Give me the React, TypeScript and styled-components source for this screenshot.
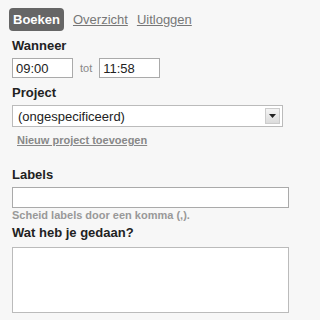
import styled, { createGlobalStyle } from "styled-components";

const GlobalStyle = createGlobalStyle`
    html, body {
        margin: 0;
        padding: 0;
        background: #f7f7f7;
        font-family: "Liberation Sans", Arial, sans-serif;
    }
`;

const Page = styled.div`
    width: 320px;
    height: 320px;
    overflow: hidden;
    padding: 8px 0 0 12px;
    box-sizing: border-box;
    color: #222;
`;

const Nav = styled.nav`
    display: flex;
    align-items: center;
    gap: 9px;
    margin-left: -3px;
`;

const ActiveTab = styled.span`
    display: inline-block;
    background: #666;
    color: #fff;
    font-weight: bold;
    font-size: 13px;
    line-height: 23px;
    padding: 0 4px;
    border-radius: 4px;
`;

const TabLink = styled.a`
    color: #777;
    font-size: 13px;
    text-decoration: underline;
    cursor: pointer;
`;

const Label = styled.div<{ $top: number }>`
    font-weight: bold;
    font-size: 13px;
    line-height: 15px;
    margin-top: ${p => p.$top}px;
`;

const TimeRow = styled.div`
    display: flex;
    align-items: center;
    gap: 7px;
    margin-top: 5px;
`;

const TimeInput = styled.input`
    width: 61px;
    height: 20px;
    box-sizing: border-box;
    border: 1px solid #aaa;
    background: #fff;
    font-family: inherit;
    font-size: 13px;
    padding: 1px 3px;
    color: #222;
`;

const Tot = styled.span`
    color: #888;
    font-size: 11px;
`;

const SelectBox = styled.div`
    display: flex;
    align-items: center;
    justify-content: space-between;
    width: 271px;
    height: 22px;
    box-sizing: border-box;
    border: 1px solid #bbb;
    background: #fff;
    margin-top: 5px;
    padding: 0 2px 0 5px;
    font-size: 13px;
`;

const SelectArrow = styled.span`
    width: 15px;
    height: 16px;
    box-sizing: border-box;
    border: 1px solid #ccc;
    background: linear-gradient(#f4f4f4, #dcdcdc);
    display: flex;
    align-items: center;
    justify-content: center;
`;

const SmallLink = styled.a`
    display: block;
    color: #888;
    font-size: 11px;
    font-weight: bold;
    text-decoration: underline;
    margin: 7px 0 0 5px;
    cursor: pointer;
`;

const TextInput = styled.input`
    display: block;
    width: 277px;
    height: 21px;
    box-sizing: border-box;
    border: 1px solid #aaa;
    background: #fff;
    margin-top: 5px;
`;

const Hint = styled.div`
    color: #999;
    font-size: 11px;
    font-weight: bold;
    margin-top: 1px;
`;

const TextArea = styled.textarea`
    display: block;
    width: 277px;
    height: 66px;
    box-sizing: border-box;
    border: 1px solid #bbb;
    background: #fff;
    margin-top: 7px;
    resize: none;
`;

export default function App() {
    return (
        <Page>
            <GlobalStyle />
            <Nav>
                <ActiveTab>Boeken</ActiveTab>
                <TabLink>Overzicht</TabLink>
                <TabLink>Uitloggen</TabLink>
            </Nav>

            <Label $top={7}>Wanneer</Label>
            <TimeRow>
                <TimeInput defaultValue="09:00" />
                <Tot>tot</Tot>
                <TimeInput defaultValue="11:58" />
            </TimeRow>

            <Label $top={7}>Project</Label>
            <SelectBox>
                <span>(ongespecificeerd)</span>
                <SelectArrow>
                    <svg width="7" height="4" viewBox="0 0 7 4">
                        <path d="M0 0h7L3.5 4z" fill="#222" />
                    </svg>
                </SelectArrow>
            </SelectBox>
            <SmallLink>Nieuw project toevoegen</SmallLink>

            <Label $top={21}>Labels</Label>
            <TextInput />
            <Hint>Scheid labels door een komma (,).</Hint>

            <Label $top={4}>Wat heb je gedaan?</Label>
            <TextArea />
        </Page>
    );
}
